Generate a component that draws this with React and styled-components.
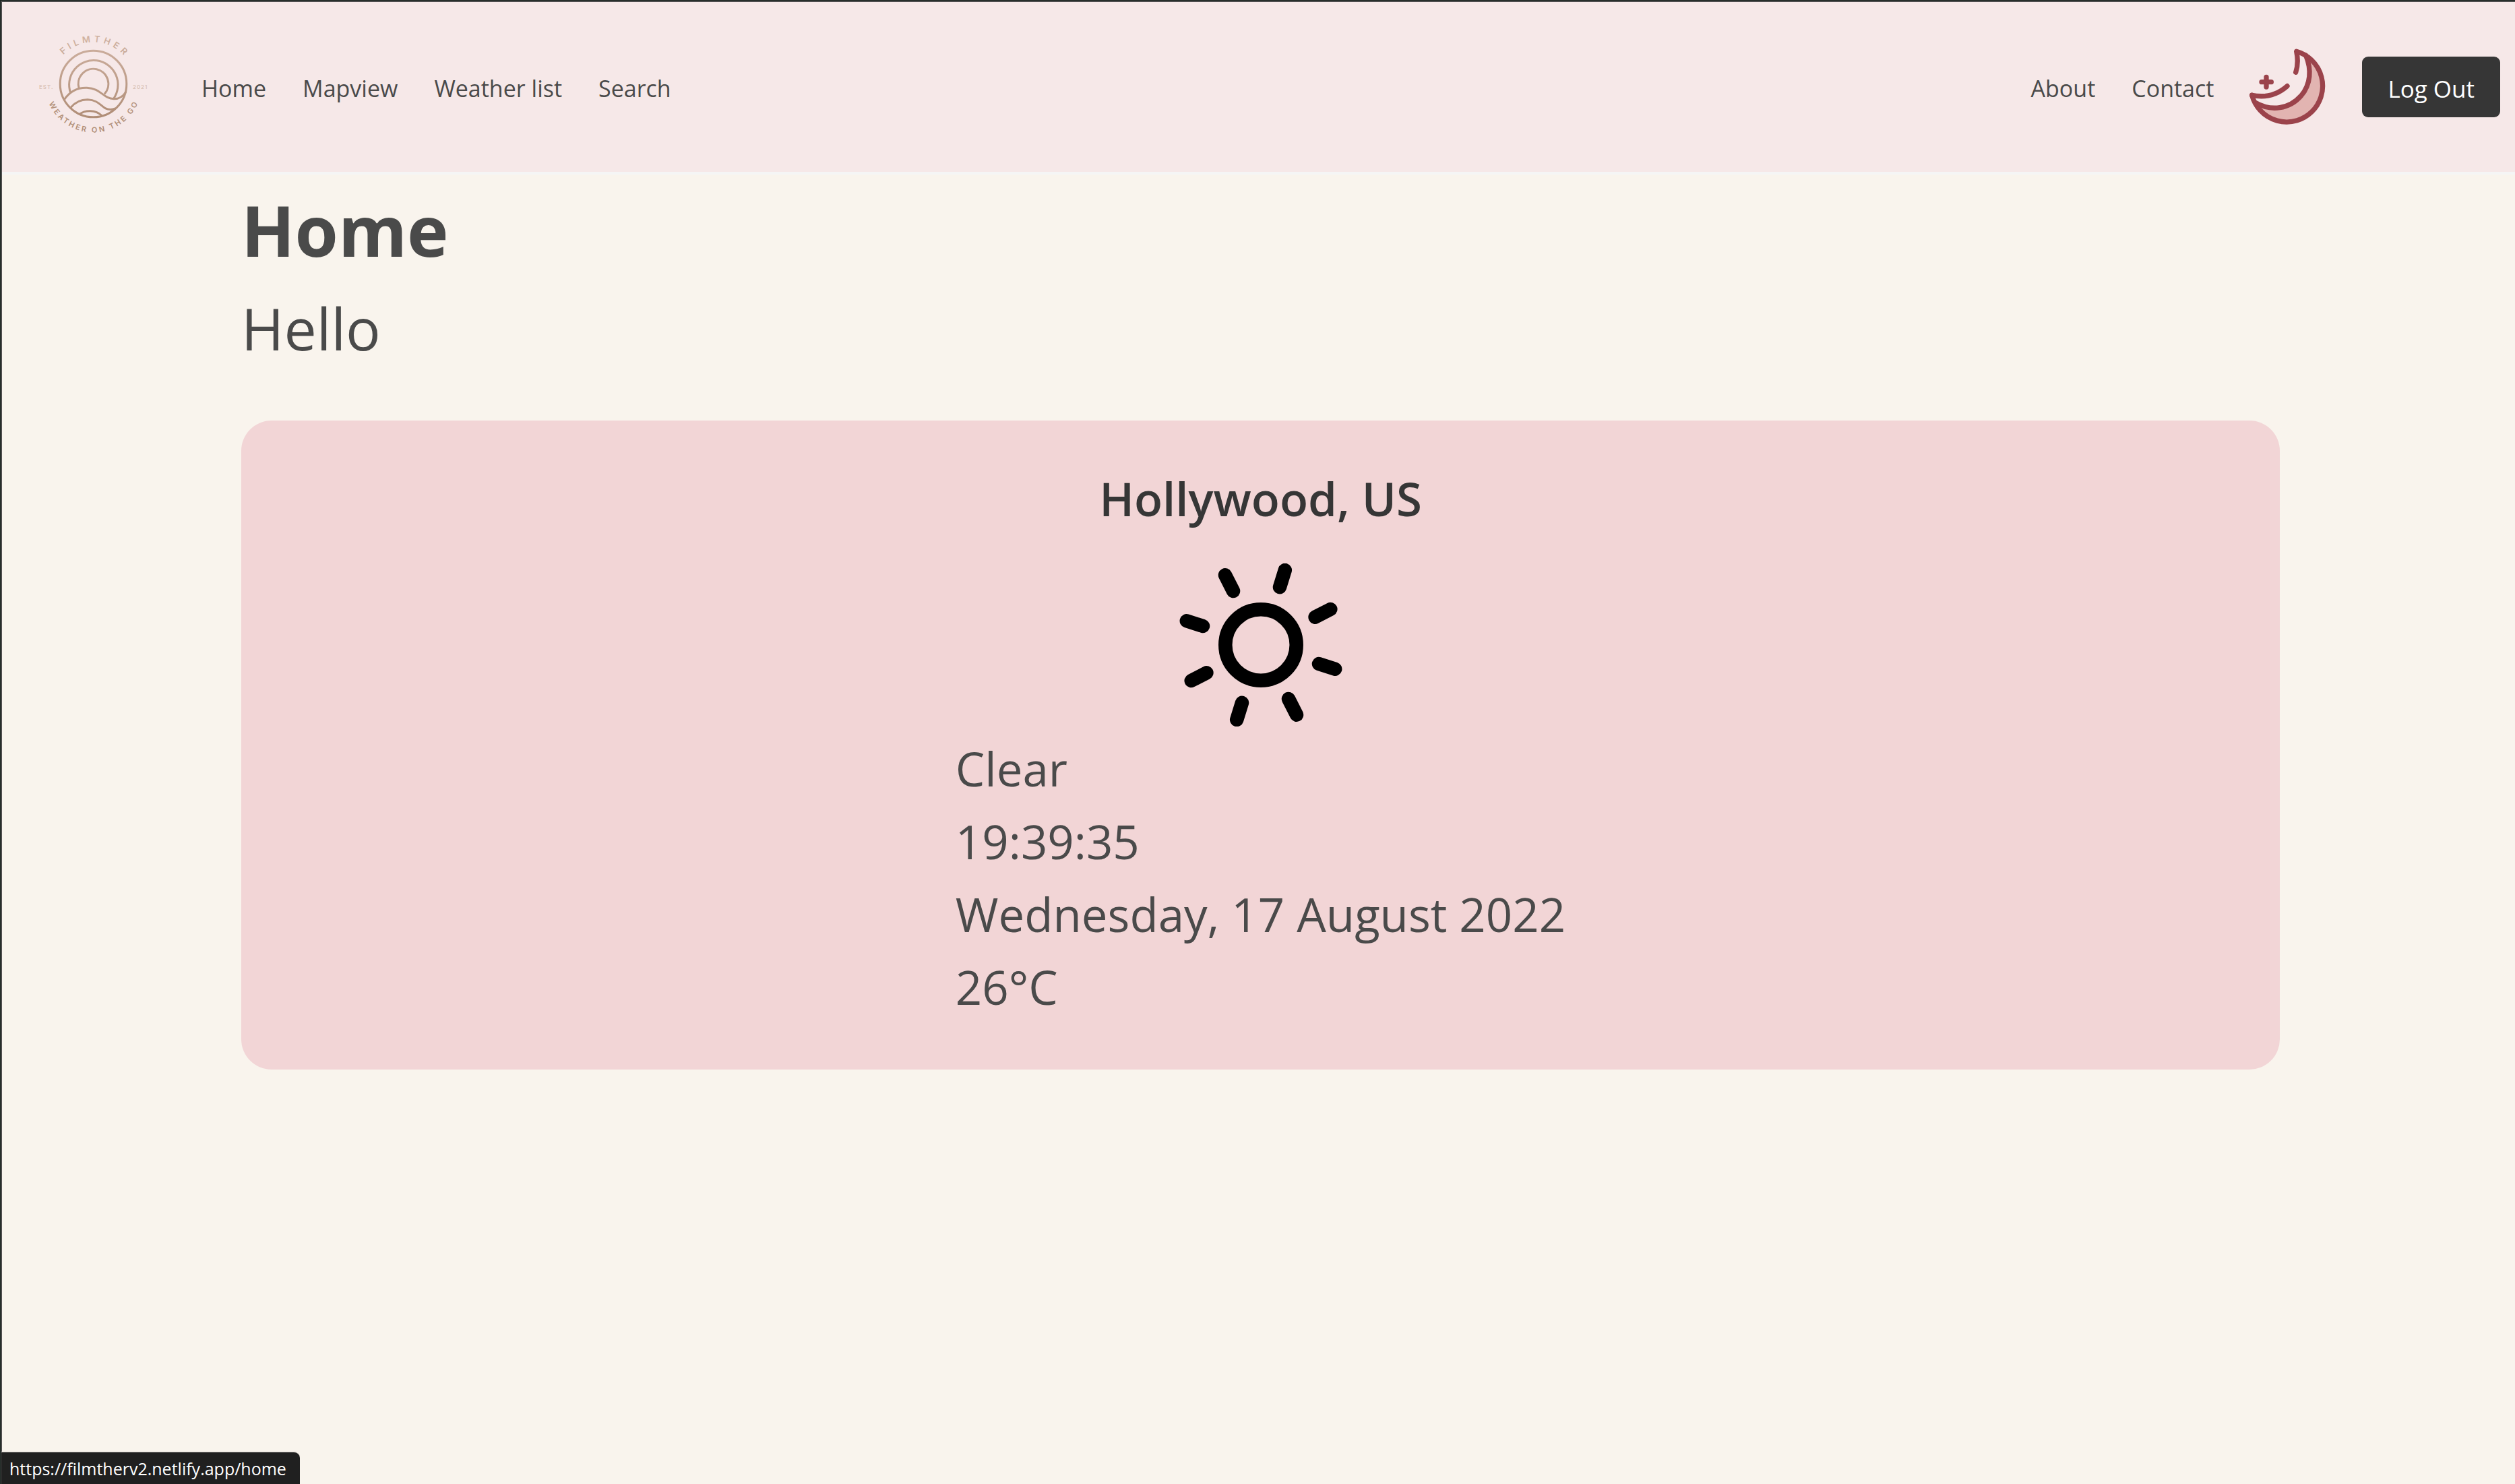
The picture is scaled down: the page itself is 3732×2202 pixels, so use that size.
import React from 'react';
import styled, { createGlobalStyle } from 'styled-components';

const GlobalStyle = createGlobalStyle`
  *, *::before, *::after { box-sizing: border-box; }
  body {
    margin: 0;
    background: #f9f4ed;
    color: #4a4a4a;
    font-family: "Segoe UI", "Open Sans", "Noto Sans", sans-serif;
  }
  h1, h2, p, ul { margin: 0; padding: 0; }
`;

const Frame = styled.div`
  display: flex;
  min-height: 100vh;
  border-top: 1px solid #1b2420;
  border-left: 1px solid #1b2420;
`;

const Page = styled.div`
  flex: 1;
  min-width: 0;
  border-top: 2px solid #4d4d4d;
  border-left: 2px solid #4d4d4d;
`;

const Navbar = styled.header`
  display: flex;
  align-items: center;
  justify-content: space-between;
  padding: 6px 22px 6px 15px;
  background: #f6e8e8;
  border-bottom: 4px solid #f5f5f5;
`;

const NavGroup = styled.nav`
  display: flex;
  align-items: center;
  gap: ${({ $gap }) => $gap}px;
`;

const NavList = styled.ul`
  display: flex;
  gap: 54px;
  list-style: none;
`;

const NavLink = styled.a`
  display: block;
  padding-top: 4px;
  color: #4a4a4a;
  font-size: 34px;
  line-height: 54px;
  text-decoration: none;
  white-space: nowrap;
`;

const LogoLink = styled.a`
  display: block;
  line-height: 0;
`;

const LogoSvg = styled.svg`
  width: 240px;
  height: 240px;
`;

const IconButton = styled.button`
  display: block;
  padding: 0;
  border: 0;
  background: none;
  line-height: 0;
  cursor: pointer;
`;

const MoonSvg = styled.svg`
  width: 114px;
  height: 114px;
`;

const LogOutButton = styled.button`
  height: 90px;
  padding: 4px 38px 0;
  border: 0;
  border-radius: 9px;
  background: #363636;
  color: #fff;
  font: inherit;
  font-size: 35px;
  white-space: nowrap;
  cursor: pointer;
`;

const Main = styled.main`
  padding: 10px 349px 0 355px;
`;

const Heading = styled.h1`
  font-size: 104px;
  font-weight: 700;
  line-height: 144px;
`;

const Greeting = styled.p`
  margin: 8px 0 71px;
  font-size: 86px;
  line-height: 132px;
`;

const WeatherCard = styled.section`
  display: flex;
  flex-direction: column;
  align-items: center;
  padding: 75px 69px 69px;
  border-radius: 45px;
  background: #f2d5d6;
`;

const City = styled.h2`
  color: #363636;
  font-size: 69px;
  font-weight: 600;
  line-height: 81px;
`;

const SunSvg = styled.svg`
  width: 242px;
  height: 242px;
  margin: 56px 0 8px;
`;

const Detail = styled.p`
  font-size: 69px;
  line-height: 108px;
`;

const StatusBar = styled.div`
  position: fixed;
  left: 2px;
  bottom: 0;
  height: 48px;
  padding: 2px 20px 0 12px;
  border-top: 1px solid #dcd8d2;
  border-radius: 0 9px 0 0;
  background: #202020;
  color: #fff;
  font-size: 25px;
  line-height: 45px;
`;

function Logo() {
  return (
    <LogoSvg viewBox="18 9 240 240" role="img" aria-label="Filmther">
      <defs>
        <linearGradient id="bronze" gradientUnits="userSpaceOnUse" x1="0" y1="52" x2="0" y2="180">
          <stop offset="0" stopColor="#d0b3a3" />
          <stop offset="1" stopColor="#ae8b74" />
        </linearGradient>
        <path id="arcTop" d="M76.5 124.5A62 62 0 0 1 200.5 124.5" />
        <path id="arcBottom" d="M67.4 113.2A72 72 0 1 0 209.6 113.2" />
      </defs>
      <g fill="none" stroke="url(#bronze)" strokeWidth="3">
        <circle cx="138.5" cy="124.5" r="49.3" />
        <path d="M104.6 137.5A36.2 36.2 0 1 1 168.8 146" />
        <path d="M117.2 131A22.3 22.3 0 1 1 155 139.5" />
        <path d="M95.6 147.5C104 135 116 129.8 129 130.2C150 131 153 146.5 169 146.8C178 146.8 183 143 187 136" />
        <path d="M104.5 160C111 152 120 147.8 130 147.8C150 148.5 150 162.5 164 162.4C167 162.3 169 161.8 171 161" />
        <path d="M118 169.5C126 163 142 162.5 151 171.5" />
      </g>
      <g fill="url(#bronze)" fontFamily="Inter, sans-serif" fontWeight="600" textAnchor="middle">
        <text fontSize="13" letterSpacing="5">
          <textPath href="#arcTop" startOffset="51.5%">FILMTHER</textPath>
        </text>
        <text fontSize="11" letterSpacing="3">
          <textPath href="#arcBottom" startOffset="50.5%">WEATHER ON THE GO</textPath>
        </text>
      </g>
      <g fill="#d8c0b4" fontFamily="Inter, sans-serif" fontSize="8" fontWeight="500" letterSpacing="1">
        <text x="58" y="132">EST.</text>
        <text x="197" y="132">2021</text>
      </g>
    </LogoSvg>
  );
}

function Moon() {
  return (
    <MoonSvg viewBox="53 37 342 342" aria-hidden="true">
      <path
        fill="#e2b4b1"
        d="M88 284C150 318 230 305 285 245C328 195 330 130 310 70A160 160 0 1 1 88 288Z"
      />
      <g fill="none" stroke="#9b434b" strokeWidth="22" strokeLinecap="round" strokeLinejoin="round">
        <path d="M64 245A160 160 0 1 0 262 50C269 82 269 112 259 143" />
        <path d="M64 245C120 256 175 245 221 204" />
        <path d="M80 278C150 318 230 307 283 247C326 196 330 130 304 68" />
        <path d="M128 164V208M107 186H150" />
      </g>
    </MoonSvg>
  );
}

function Sun() {
  return (
    <SunSvg viewBox="-121 -121 242 242" role="img" aria-label="Clear sky">
      <g fill="none" stroke="#000" strokeWidth="20.5" strokeLinecap="round">
        <circle r="52.7" />
        <path d="M-53 -103.7L-41 -80M35.8 -111L28 -85.7M103.3 -53L80.6 -41.3M110.2 35.7L86 28" />
        <path d="M53 103.7L41 80M-35.8 111L-28 85.7M-103.3 53L-80.6 41.3M-110.2 -35.7L-86 -28" />
      </g>
    </SunSvg>
  );
}

const mainLinks = ['Home', 'Mapview', 'Weather list', 'Search'];
const sideLinks = ['About', 'Contact'];
const details = ['Clear', '19:39:35', 'Wednesday, 17 August 2022', '26°C'];

const toHref = (label) => `#/${label.toLowerCase().replace(' ', '-')}`;

function Links({ items }) {
  return (
    <NavList>
      {items.map((label) => (
        <li key={label}>
          <NavLink href={toHref(label)}>{label}</NavLink>
        </li>
      ))}
    </NavList>
  );
}

export default function App() {
  return (
    <>
      <GlobalStyle />
      <Frame>
        <Page>
          <Navbar>
            <NavGroup $gap={41} aria-label="Main">
              <LogoLink href="#/home">
                <Logo />
              </LogoLink>
              <Links items={mainLinks} />
            </NavGroup>
            <NavGroup $gap={53} aria-label="Account">
              <Links items={sideLinks} />
              <IconButton type="button" aria-label="Toggle dark mode">
                <Moon />
              </IconButton>
              <LogOutButton type="button">Log Out</LogOutButton>
            </NavGroup>
          </Navbar>
          <Main>
            <Heading>Home</Heading>
            <Greeting>Hello</Greeting>
            <WeatherCard>
              <City>Hollywood, US</City>
              <Sun />
              <div>
                {details.map((text) => (
                  <Detail key={text}>{text}</Detail>
                ))}
              </div>
            </WeatherCard>
          </Main>
        </Page>
      </Frame>
      <StatusBar>https://filmtherv2.netlify.app/home</StatusBar>
    </>
  );
}
